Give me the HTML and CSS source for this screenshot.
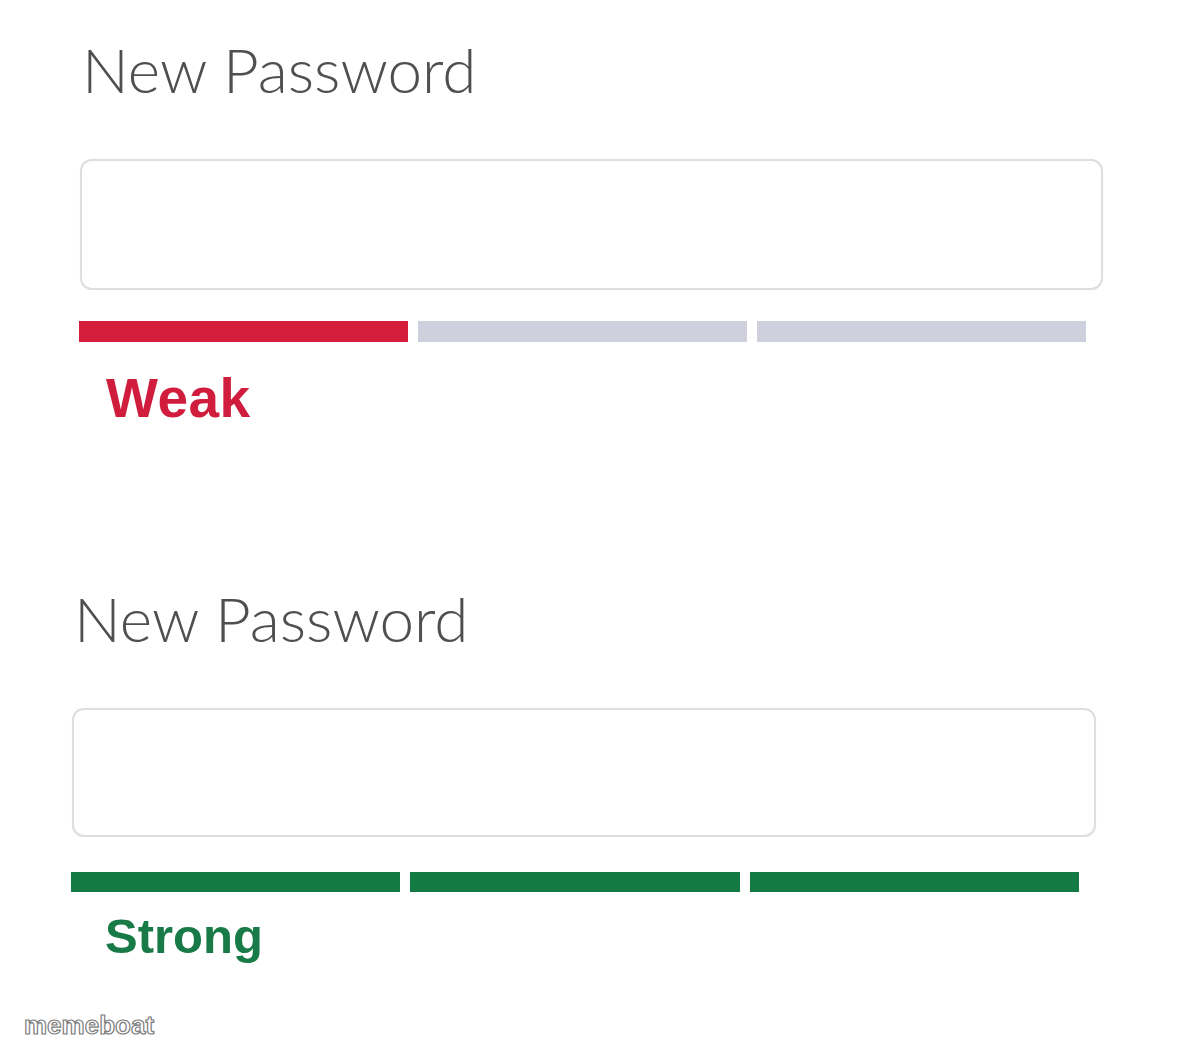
FILE: index.html
```html
<!DOCTYPE html>
<html lang="en">
  <head>
    <meta charset="UTF-8" />
    <meta name="viewport" content="width=device-width, initial-scale=1.0" />
    <title>Password Strength</title>
    <link rel="stylesheet" href="styles.css">
  </head>
  <body>
    <main class="page">
      <div class="field field-weak">
        <label class="field-label" for="pw1">New Password</label>
        <input class="field-input" id="pw1" type="password" />
        <div class="meter">
          <span class="meter-seg on"></span>
          <span class="meter-seg"></span>
          <span class="meter-seg"></span>
        </div>
        <p class="meter-text">Weak</p>
      </div>

      <div class="field field-strong">
        <label class="field-label" for="pw2">New Password</label>
        <input class="field-input" id="pw2" type="password" />
        <div class="meter">
          <span class="meter-seg on"></span>
          <span class="meter-seg on"></span>
          <span class="meter-seg on"></span>
        </div>
        <p class="meter-text">Strong</p>
      </div>
    </main>

    <div class="watermark">memeboat</div>
  </body>
</html>
```

FILE: styles.css
```css
* {
  margin: 0;
  padding: 0;
  box-sizing: border-box;
}

body {
  background-color: #fff;
  font-family: "Lato", "Liberation Sans", sans-serif;
  height: 1057px;
  overflow: hidden;
}

.page {
  display: flex;
  flex-direction: column;
}

.field {
  display: flex;
  flex-direction: column;
}

.field-label {
  display: block;
  font-size: 62px;
  font-weight: 300;
  line-height: 1;
  color: #4f4f4f;
  margin-left: 2px;
}

.field-input {
  display: block;
  width: 1023px;
  height: 131px;
  margin-top: 59px;
  border: 2px solid #dedede;
  border-radius: 12px;
  background: #fff;
  outline: none;
  box-shadow: 0 0 1px rgba(0, 0, 0, 0.08);
}

.meter {
  display: flex;
  gap: 10px;
  width: 1007px;
  height: 21px;
  margin-top: 31px;
  margin-left: -1px;
}

.meter-seg {
  flex: 1;
  background-color: #cfd0de;
}

.meter-text {
  font-family: "Liberation Sans", Arial, sans-serif;
  font-weight: bold;
  font-size: 55px;
  line-height: 1;
  margin-top: 29px;
  margin-left: 26px;
  letter-spacing: 0.5px;
}

/* weak state */
.field-weak {
  margin: 38px 0 0 80px;
}

.field-weak .meter-seg.on {
  background-color: #d41c3b;
}

.field-weak .meter-text {
  color: #d11d3d;
}

/* strong state */
.field-strong {
  margin: 161px 0 0 72px;
}

.field-strong .field-input {
  width: 1024px;
  height: 129px;
}

.field-strong .meter {
  width: 1008px;
  height: 20px;
  margin-top: 35px;
}

.field-strong .meter-seg.on {
  background-color: #137a43;
}

.field-strong .meter-text {
  color: #187a46;
  font-size: 49px;
  margin-top: 20px;
  margin-left: 33px;
  letter-spacing: 0;
}

.watermark {
  position: absolute;
  left: 24px;
  top: 1010px;
  font-family: "Liberation Sans", Arial, sans-serif;
  font-weight: bold;
  font-size: 26px;
  letter-spacing: 0;
  color: #fff;
  -webkit-text-stroke: 1.2px #7d7d7d;
}
```
